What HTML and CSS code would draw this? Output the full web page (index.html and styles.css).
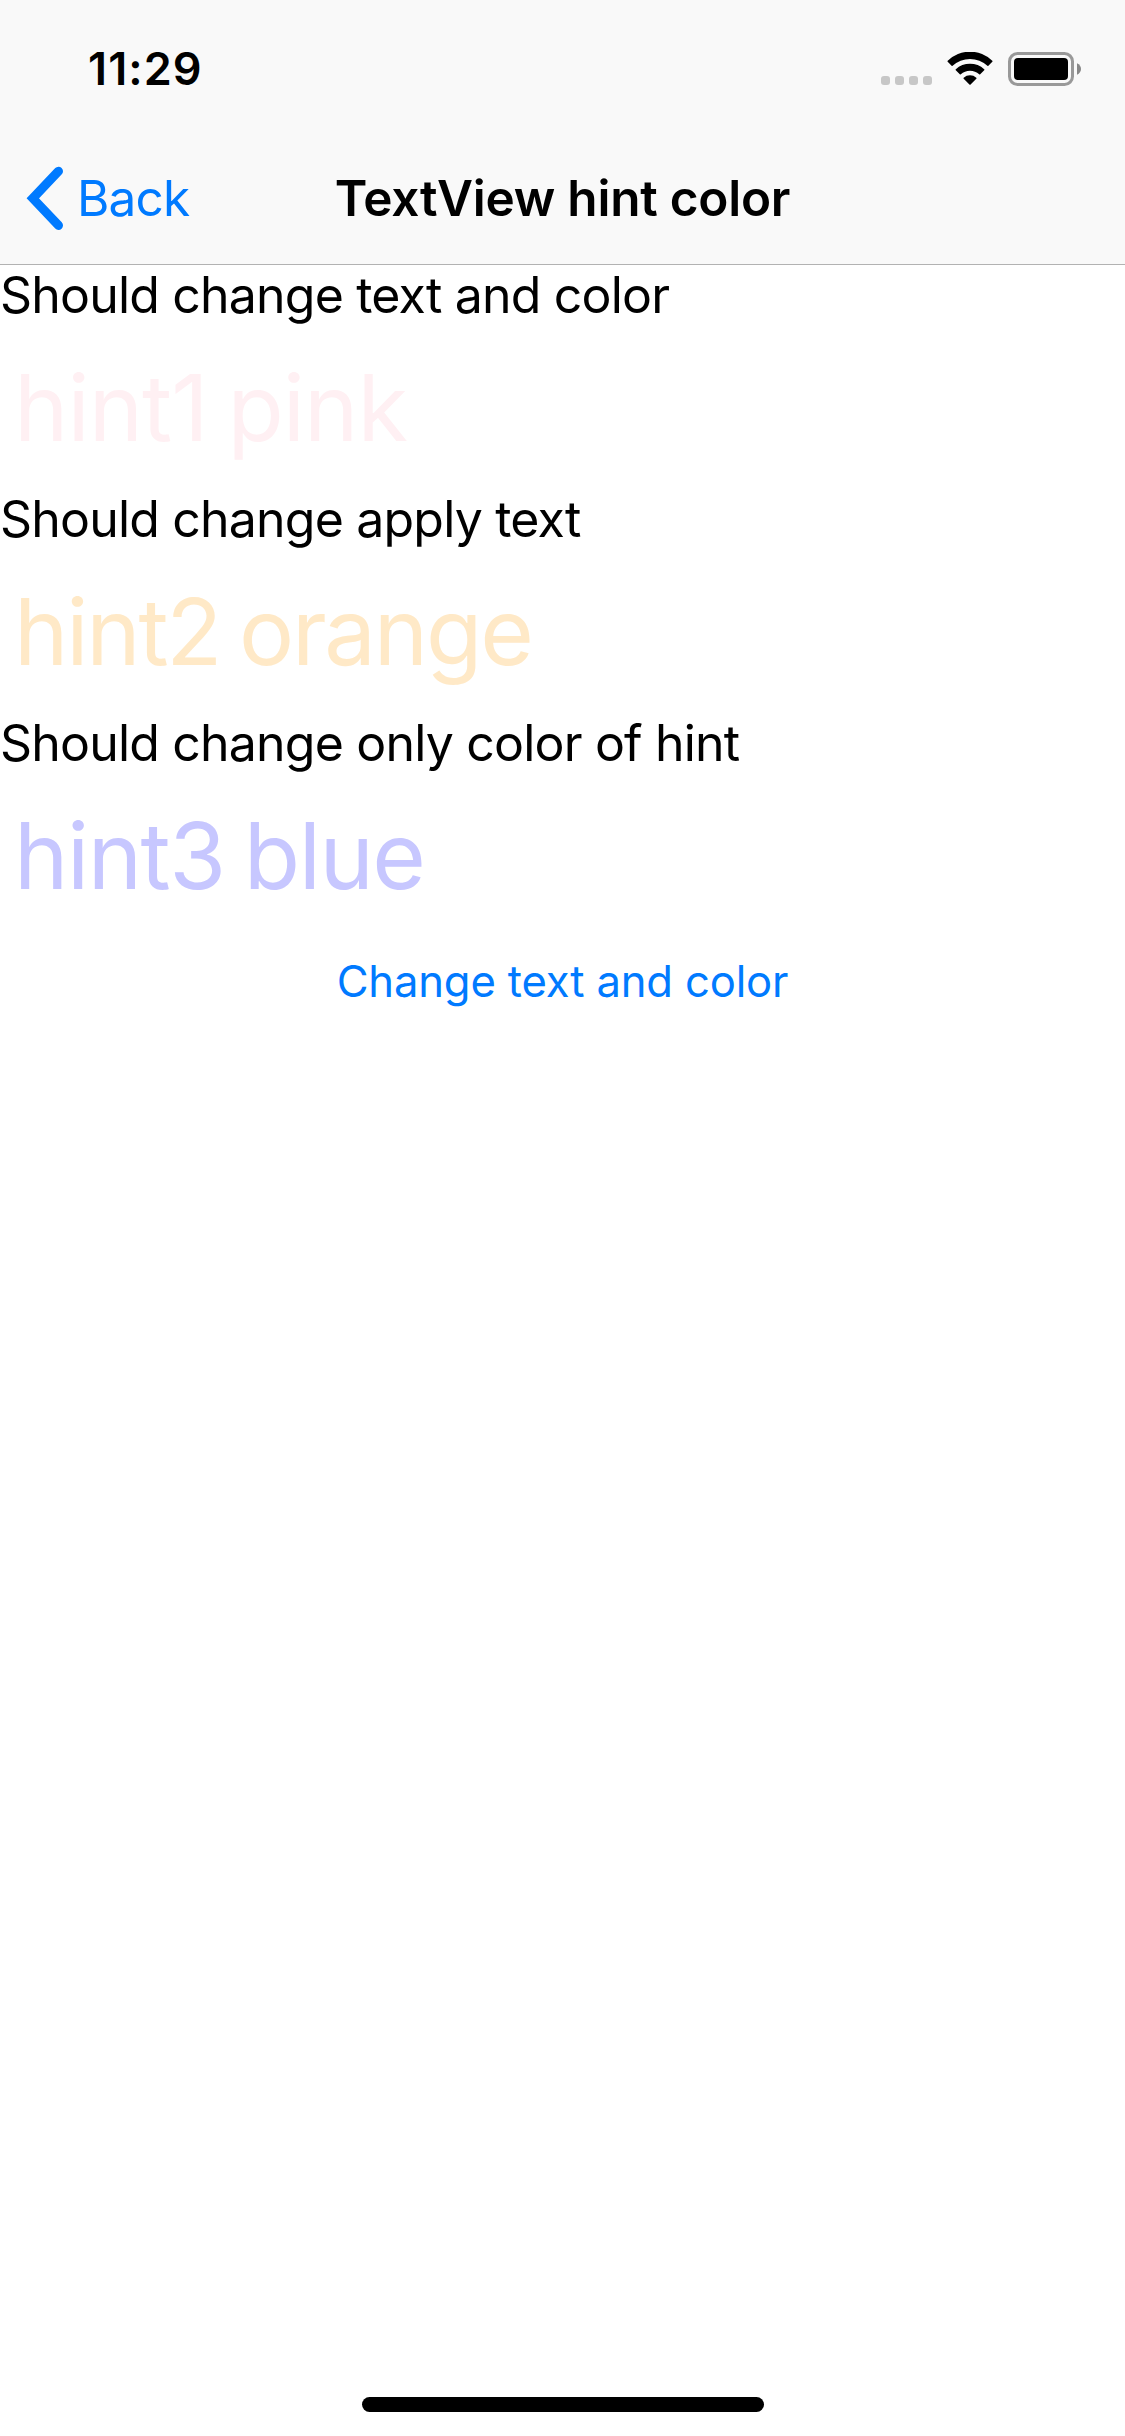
FILE: index.html
```html
<!DOCTYPE html>
<html lang="en">
<head>
<meta charset="utf-8">
<title>TextView hint color</title>
<link rel="stylesheet" href="styles.css">
</head>
<body>
<div class="screen">
  <header class="header">
    <div class="status-bar">
      <span class="time">11:29</span>
      <div class="status-icons">
        <svg class="signal" width="51" height="9" viewBox="0 0 51 9" fill="#c7c7c7"><rect width="9" height="9" rx="3"/><rect x="14" width="9" height="9" rx="3"/><rect x="28" width="9" height="9" rx="3"/><rect x="42" width="9" height="9" rx="3"/></svg>
        <svg class="wifi" width="46" height="33" viewBox="0 0 46 33"><path d="M0.7 9.7Q0.2 9.2 0.7 8.7A32 32 0 0 1 45.3 8.7Q45.8 9.2 45.3 9.7L41.4 13.8Q40.9 14.3 40.4 13.8A25.5 25.5 0 0 0 5.6 13.8Q5.1 14.3 4.6 13.8ZM8.8 18.3Q8.3 17.8 8.8 17.3A20.7 20.7 0 0 1 37.2 17.3Q37.7 17.8 37.2 18.3L33.2 22.2Q32.7 22.7 32.2 22.2A13.7 13.7 0 0 0 13.8 22.2Q13.3 22.7 12.8 22.2ZM16.7 26.7Q16.2 26.2 16.7 25.7A9.5 9.5 0 0 1 29.3 25.7Q29.8 26.2 29.3 26.7L23.6 32.5Q23 33 22.4 32.5Z"/></svg>
        <svg class="battery" width="73" height="34" viewBox="0 0 73 34"><rect x="1.5" y="1.5" width="63" height="31" rx="8" fill="none" stroke="#999" stroke-width="3"/><rect x="6" y="6" width="54" height="22" rx="4"/><path d="M69 11.2C71.6 12.4 73 14.6 73 17S71.6 21.6 69 22.8Z" fill="#888"/></svg>
      </div>
    </div>
    <nav class="nav-bar">
      <a class="back"><svg class="chevron" width="37" height="64" viewBox="0 0 37 64"><path d="M32.5 5.2L6.8 32.3L32.5 59.4" fill="none" stroke="#007aff" stroke-width="9" stroke-linecap="round"/></svg><span class="back-label">Back</span></a>
      <h1 class="title">TextView hint color</h1>
    </nav>
  </header>
  <main class="content">
    <div class="label">Should change text and color</div>
    <div class="hint pink">hint1 pink</div>
    <div class="label">Should change apply text</div>
    <div class="hint orange">hint2 orange</div>
    <div class="label">Should change only color of hint</div>
    <div class="hint blue">hint3 blue</div>
    <button class="action">Change text and color</button>
  </main>
  <div class="home-indicator"></div>
</div>
</body>
</html>
```
FILE: styles.css
```css
* { box-sizing: border-box; }
body { margin: 0; background: #fff; color: #000; font-family: Inter, "Liberation Sans", sans-serif; }
.screen { width: 1125px; height: 2436px; display: flex; flex-direction: column; }
.header { height: 265px; background: #f9f9f9; border-bottom: 1px solid #b2b2b2; }
.status-bar { height: 132px; display: flex; justify-content: space-between; padding: 39px 44px 0 88px; }
.time { font-size: 45px; font-weight: 600; line-height: 60px; letter-spacing: 1.1px; }
.status-icons { display: flex; align-items: flex-start; }
.signal { margin: 37px 15px 0 0; }
.wifi { margin: 13px 15px 0 0; }
.battery { margin-top: 13px; }
.nav-bar { height: 132px; display: grid; grid-template-columns: 1fr auto 1fr; align-items: center; }
.back { display: flex; align-items: center; padding-left: 26px; color: #007aff; font-size: 49.5px; line-height: 60px; letter-spacing: -0.8px; }
.back-label { padding-left: 14px; }
.title { margin: 0; font-size: 49.5px; font-weight: 600; line-height: 60px; letter-spacing: -0.23px; }
.content { flex: 1; display: flex; flex-direction: column; }
.label { font-size: 50px; line-height: 60px; letter-spacing: -0.81px; white-space: nowrap; }
.hint { height: 164px; padding: 29px 0 0 14px; font-size: 92px; line-height: 107px; word-spacing: -5px; white-space: nowrap; }
.pink { color: #fff0f3; letter-spacing: -1px; }
.orange { color: #ffe9c7; letter-spacing: -2.2px; }
.blue { color: #c7c7ff; letter-spacing: -1.5px; }
.action { border: 0; background: none; padding: 1px 0 0; font: 43.6px/88px Inter, "Liberation Sans", sans-serif; letter-spacing: -0.16px; color: #007aff; }
.home-indicator { width: 402px; height: 15px; margin: 0 auto 24px; border-radius: 7.5px; background: #000; }
```
